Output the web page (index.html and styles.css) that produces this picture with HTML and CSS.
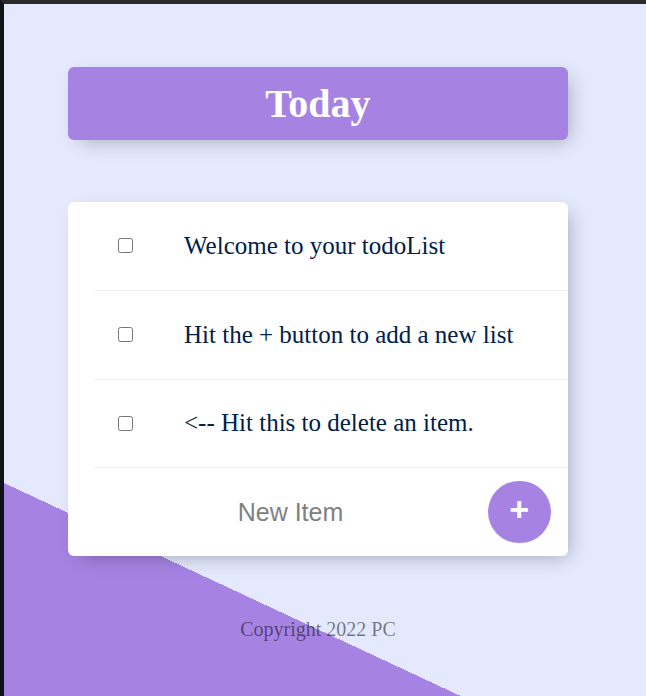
FILE: index.html
```html
<!DOCTYPE html>
<html lang="en">
<head>
<meta charset="utf-8">
<title>To-Do List</title>
<link rel="stylesheet" href="styles.css">
</head>
<body>
<div class="frame">
  <div class="page">
    <div class="box heading">
      <h1>Today</h1>
    </div>
    <div class="box list">
      <div class="item">
        <input type="checkbox">
        <p>Welcome to your todoList</p>
      </div>
      <div class="item">
        <input type="checkbox">
        <p>Hit the + button to add a new list</p>
      </div>
      <div class="item">
        <input type="checkbox">
        <p>&lt;-- Hit this to delete an item.</p>
      </div>
      <form class="item add-row">
        <input type="text" name="newItem" placeholder="New Item" autocomplete="off">
        <button type="button" class="add-btn">+</button>
      </form>
    </div>
    <footer class="footer">Copyright 2022 PC</footer>
  </div>
</div>
</body>
</html>
```
FILE: styles.css
```css
html, body {
  margin: 0;
  padding: 0;
  overflow: hidden;
}

body {
  background: #0f131a;
}

.frame {
  width: 646px;
  height: 696px;
  box-sizing: border-box;
  border-top: 4px solid #2b2b2b;
  border-left: 4px solid #0f131a;
  background: linear-gradient(25deg, #A683E3 193px, #E4E9FD 193px);
  overflow: hidden;
}

.page {
  padding-top: 63px;
}

.box {
  width: 500px;
  margin-left: 64px;
  border-radius: 6px;
  box-shadow: 6px 6px 19px -6px rgba(0, 0, 0, 0.3);
}

.heading {
  height: 73px;
  background: #A683E3;
  display: flex;
  align-items: center;
  justify-content: center;
}

.heading h1 {
  margin: 0;
  color: #fff;
  font-family: "Liberation Serif", "Times New Roman", serif;
  font-weight: bold;
  font-size: 40px;
  line-height: 1.15;
}

.list {
  margin-top: 62px;
  background: #fff;
  display: flex;
  flex-direction: column;
}

.item {
  display: flex;
  align-items: center;
  min-height: 87.75px;
  margin-left: 25px;
  border-bottom: 1px solid #F1F1F1;
}

.item:last-child {
  border-bottom: 0;
  min-height: 87.5px;
}

.item input[type="checkbox"] {
  width: 15px;
  height: 15px;
  margin: 0 26px 0 25px;
  flex-shrink: 0;
}

.item p {
  margin: 0;
  padding: 25px;
  font-family: "Liberation Serif", "Times New Roman", serif;
  font-size: 25px;
  color: #00204a;
}

.add-row input[type="text"] {
  width: 391px;
  height: 75px;
  padding: 1px 2px;
  border: none;
  background: transparent;
  font-family: "Liberation Sans", Arial, sans-serif;
  font-size: 25px;
  text-align: center;
  outline: none;
  flex-shrink: 0;
}

.add-row input[type="text"]::placeholder {
  color: grey;
  opacity: 1;
}

.add-btn {
  width: 62.5px;
  height: 62.5px;
  border-radius: 50%;
  border: 0;
  background: #A683E3;
  color: #fff;
  font-family: "Liberation Sans", Arial, sans-serif;
  font-weight: bold;
  font-size: 34px;
  padding: 0 0 6px;
  flex-shrink: 0;
}

.footer {
  width: 500px;
  margin-left: 64px;
  margin-top: 62px;
  text-align: center;
  color: rgba(0, 0, 0, 0.5);
  font-family: "Liberation Serif", "Times New Roman", serif;
  font-size: 20px;
}
```
